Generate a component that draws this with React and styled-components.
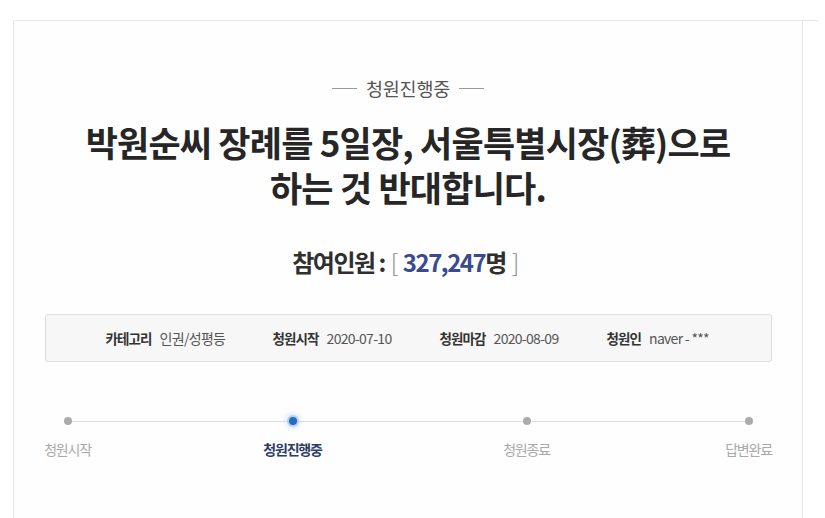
import React from "react";
import styled, { createGlobalStyle } from "styled-components";

const Global = createGlobalStyle`
  html, body { margin: 0; padding: 0; background: #ffffff; }
  body { font-family: "Noto Sans CJK KR", "Noto Sans", sans-serif; color: #333; }
`;

const Page = styled.div`
  padding: 20px 0 0 13px;
  height: 498px;
  overflow: hidden;
`;

const Card = styled.div`
  width: 805px;
  height: 100%;
  border-top: 1px solid #e6e6e6;
  border-left: 1px solid #e6e6e6;
  border-top-left-radius: 3px;
  box-sizing: border-box;
`;

const Main = styled.section`
  width: 789px;
  height: 100%;
  border-right: 1px solid #e6e6e6;
  background: #fefefe;
  display: flex;
  flex-direction: column;
  align-items: center;
  padding-top: 54px;
  box-sizing: border-box;
`;

const Status = styled.div`
  display: flex;
  align-items: center;
  gap: 9px;
  font-size: 18.5px;
  line-height: 26px;
  letter-spacing: -0.2px;
  color: #555;
  &::before, &::after {
    content: "";
    width: 25px;
    height: 1px;
    background: #9a9a9a;
  }
`;

const Title = styled.h1`
  margin: 18px 0 0;
  font-size: 35px;
  line-height: 45px;
  font-weight: 700;
  letter-spacing: -0.8px;
  color: #262626;
  text-align: center;
`;

const Count = styled.div`
  margin-top: 37px;
  font-size: 24px;
  line-height: 32px;
  font-weight: 700;
  letter-spacing: -1.5px;
  color: #2f2f2f;
  display: flex;
  align-items: baseline;
`;

const Bracket = styled.span`
  font-weight: 300;
  color: #8a8a8a;
  margin: 0 6px;
`;

const Number = styled.span`
  color: #3a4a8e;
`;

const InfoBox = styled.div`
  margin-top: 36px;
  width: 727px;
  height: 48px;
  box-sizing: border-box;
  border: 1px solid #dedede;
  border-radius: 3px;
  background: #f7f7f7;
  display: grid;
  grid-template-columns: repeat(4, 167px);
  align-items: center;
  padding-left: 60px;
`;

const InfoItem = styled.div`
  display: flex;
  align-items: baseline;
  gap: 8px;
  white-space: nowrap;
`;

const InfoLabel = styled.span`
  font-size: 13.5px;
  letter-spacing: -0.9px;
  font-weight: 700;
  color: #333;
`;

const InfoValue = styled.span`
  font-size: 14px;
  letter-spacing: -0.7px;
  color: #555;
`;

const Steps = styled.div`
  margin-top: 54px;
  width: 741px;
  display: flex;
  position: relative;
  &::before {
    content: "";
    position: absolute;
    left: 30px;
    right: 30px;
    top: 5px;
    height: 1px;
    background: #dcdcdc;
  }
`;

const Step = styled.div`
  width: 60px;
  margin-left: ${(p) => p.$offset}px;
  display: flex;
  flex-direction: column;
  align-items: center;
  position: relative;
`;

const Dot = styled.span`
  width: 8px;
  height: 8px;
  margin: 1px 0;
  border-radius: 50%;
  background: ${(p) => (p.$active ? "#2a6ac0" : "#ababab")};
  box-shadow: ${(p) =>
    p.$active ? "0 0 0 2px rgba(140, 185, 238, 0.5), 0 0 5px 4px rgba(170, 205, 242, 0.4)" : "none"};
`;

const StepLabel = styled.span`
  margin-top: 13px;
  font-size: 14px;
  line-height: 20px;
  letter-spacing: -1.2px;
  white-space: nowrap;
  font-weight: ${(p) => (p.$active ? 700 : 400)};
  color: ${(p) => (p.$active ? "#2c3d68" : "#a9a9a9")};
`;

const info = [
  ["카테고리", "인권/성평등"],
  ["청원시작", "2020-07-10"],
  ["청원마감", "2020-08-09"],
  ["청원인", "naver - ***"],
];

const steps = [
  ["청원시작", false, 0],
  ["청원진행중", true, 165],
  ["청원종료", false, 174],
  ["답변완료", false, 162],
];

export default function App() {
  return (
    <>
      <Global />
      <Page>
        <Card>
          <Main>
            <Status>청원진행중</Status>
            <Title>
              박원순씨 장례를 5일장, 서울특별시장(葬)으로
              <br />
              하는 것 반대합니다.
            </Title>
            <Count>
              참여인원 :<Bracket>[</Bracket>
              <Number>327,247</Number>명<Bracket>]</Bracket>
            </Count>
            <InfoBox>
              {info.map(([l, v]) => (
                <InfoItem key={l}>
                  <InfoLabel>{l}</InfoLabel>
                  <InfoValue>{v}</InfoValue>
                </InfoItem>
              ))}
            </InfoBox>
            <Steps>
              {steps.map(([l, a, o]) => (
                <Step key={l} $offset={o}>
                  <Dot $active={a} />
                  <StepLabel $active={a}>{l}</StepLabel>
                </Step>
              ))}
            </Steps>
          </Main>
        </Card>
      </Page>
    </>
  );
}
